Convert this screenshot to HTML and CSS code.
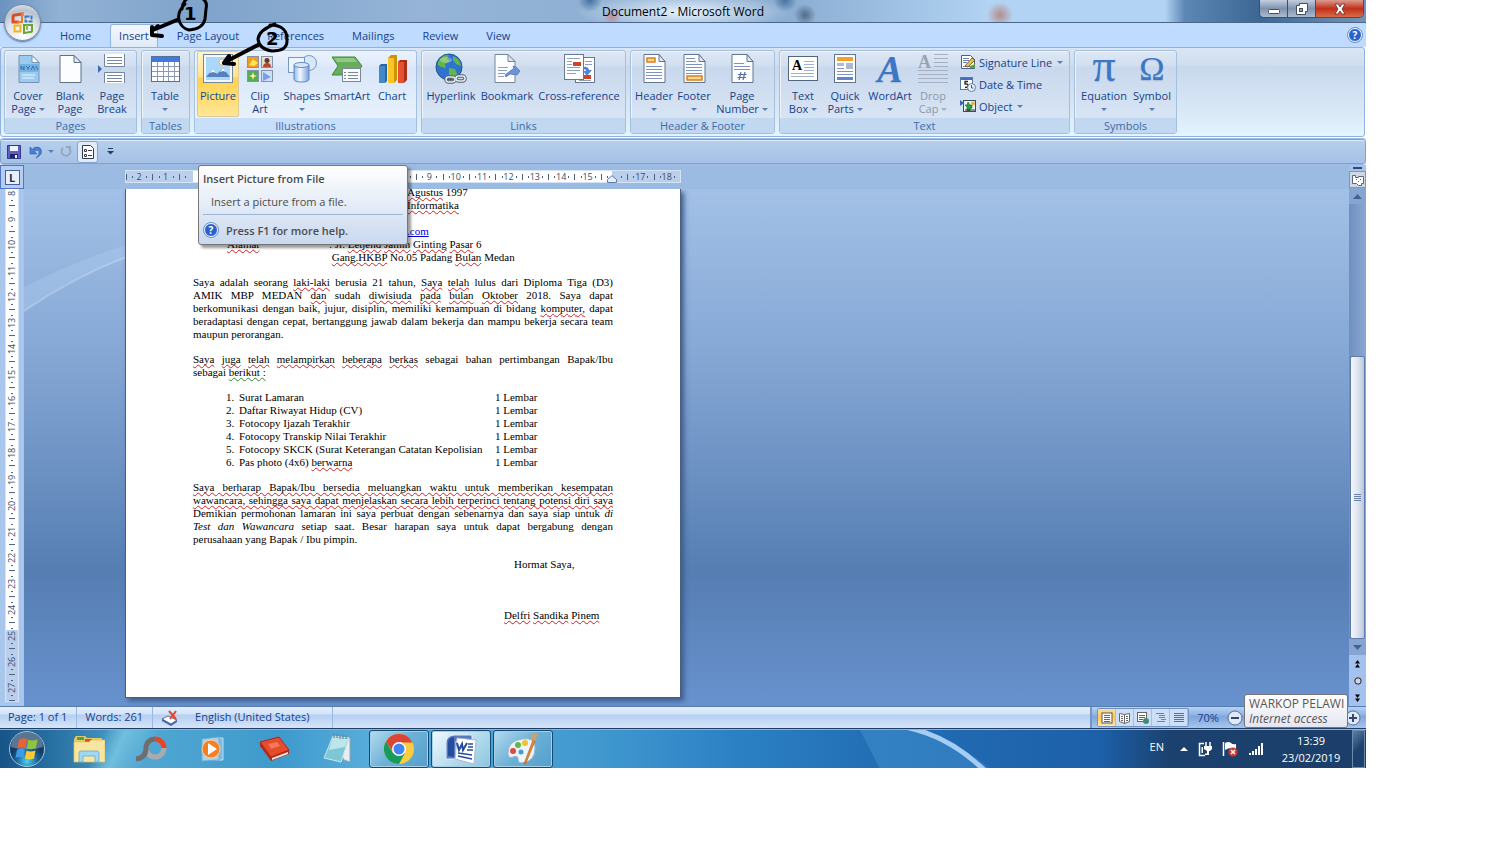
FILE: index.html
```html
<!DOCTYPE html>
<html lang="en">
<head>
    <meta charset="UTF-8">
    <meta name="viewport" content="width=device-width, initial-scale=1.0">
    <title>Document2 - Microsoft Word</title>
    <link rel="stylesheet" href="styles.css">
</head>
<body>
<div class="desktop">

    <!-- Title bar -->
    <header class="titlebar">
        <h1>Document2 - Microsoft Word</h1>
        <div class="window-buttons">
            <button aria-label="Minimize"><svg width="12" height="12" viewBox="0 0 12 12"><rect x=".5" y="6.500" width="11" height="4" rx="1" fill="#fff" stroke="#454d5c"/></svg></button>
            <button aria-label="Restore"><svg width="12" height="12" viewBox="0 0 12 12"><path d="M3.500.500h8v8h-2v3h-9v-9h3z" fill="#fff" stroke="#454d5c"/><rect x="3.500" y="5.500" width="3" height="3" fill="#8ba2c0" stroke="#454d5c"/></svg></button>
            <button class="close" aria-label="Close"><svg width="12" height="12" viewBox="0 0 12 12"><path d="M1 1h3l2 3 2-3h3L8 6l3 5H8L6 8l-2 3H1l3-5z" fill="#fff" stroke="#5b3030" stroke-width=".8"/></svg></button>
        </div>
    </header>

    <button class="office-button" aria-label="Office Button">
        <svg width="24" height="24" viewBox="0 0 24 24" fill="none" stroke-width="3">
            <path d="M11 5V3L4 4q-2 0-2 2v5h6" stroke="#d9501e"/>
            <path d="M11 2v9H6" stroke="#ee7d2b" stroke-width="2"/>
            <rect x="14.500" y="5.500" width="6" height="5" stroke="#3a78c6" stroke-width="2" stroke-dasharray="4 1"/>
            <rect x="3.500" y="14.500" width="6" height="6" stroke="#f4b31d" stroke-width="2"/>
            <path d="M13 14h8v6q0 1-2 1l-6 1z" stroke="#6aa52c" stroke-width="2"/>
            <path d="M16 14v5" stroke="#8cc63f" stroke-width="2"/>
        </svg>
    </button>

    <!-- Ribbon -->
    <nav class="tabs">
        <button>Home</button>
        <button class="active">Insert</button>
        <button>Page Layout</button>
        <button>References</button>
        <button>Mailings</button>
        <button>Review</button>
        <button>View</button>
        <button class="help" aria-label="Help"><span class="help-icon">?</span></button>
    </nav>

    <section class="ribbon">
        <div class="group">
            <div class="items">
                <button class="tool">
                    <svg class="icon" viewBox="0 0 32 32"><path d="M7 2.500h13l7 7v20H7z" fill="#9ccbf0" stroke="#7893b5"/><path d="M20 2.500v7h7z" fill="#fff" stroke="#7893b5"/><path d="M7.500 11h19v8h-19z" fill="#74b3e4"/><path d="M9 17v-4l3 4v-4m2 0 2 2v2m0-2 2-2m1 4 2-4 2 4m1-4 2 4" stroke="#356fa8" fill="none"/><path d="M10 22h13M10 25h12" stroke="#e8f5ff"/></svg>
                    <span>Cover<br>Page <i class="arrow"></i></span>
                </button>
                <button class="tool">
                    <svg class="icon" viewBox="0 0 32 32"><path d="M6 2.500h14l7 7v20H6z" fill="#fcfdff" stroke="#5f6f86"/><path d="M20 2.500v7h7z" fill="#dfe8f4" stroke="#5f6f86"/></svg>
                    <span>Blank<br>Page</span>
                </button>
                <button class="tool">
                    <svg class="icon" viewBox="0 0 32 32"><path d="M8.500 1v12.500h20V1M8.500 30V19.500h20V30" fill="#fff" stroke="#74859e"/><path d="M11 4.500h15M11 7.500h15M11 10.500h15M11 22.500h15M11 25.500h15M11 28.500h15" stroke="#7188b0"/><path d="M2 12v8l4-4z" fill="#3e69b8"/></svg>
                    <span>Page<br>Break</span>
                </button>
            </div>
            <h2>Pages</h2>
        </div>

        <div class="group">
            <div class="items">
                <button class="tool">
                    <svg class="icon" viewBox="0 0 32 32"><rect x="2.500" y="3.500" width="28" height="25" fill="#fff" stroke="#5c6f93"/><path d="M3 4h27v5H3z" fill="#3f7be0"/><path d="M3 13.500h27M3 18.500h27M3 23.500h27M8.500 9v19M14.500 9v19M19.500 9v19M25.500 9v19" stroke="#8c9ab3"/></svg>
                    <span>Table<br><i class="arrow"></i></span>
                </button>
            </div>
            <h2>Tables</h2>
        </div>

        <div class="group lit">
            <div class="items">
                <button class="tool selected">
                    <svg class="icon" viewBox="0 0 32 32"><rect x="1.500" y="1.500" width="29" height="28" fill="#f5f8fb" stroke="#75879e"/><path d="M4 4h24v23H4z" fill="#a9d8fa"/><circle cx="20" cy="9" r="3" fill="#fff2cf" stroke="#eab676"/><path d="M4 24l7-8 4 5 6-6 7 9z" fill="#587fbd"/><path d="M8 20l3-4 3 4-3-1zM18 19l3-4 3 4-3-1z" fill="#fff"/></svg>
                    <span>Picture</span>
                </button>
                <button class="tool">
                    <svg class="icon" viewBox="0 0 32 32"><g stroke="#8493a8"><rect x="3.500" y="3.500" width="11" height="11" fill="#f29a22"/><rect x="17.500" y="3.500" width="11" height="11" fill="#e8ddd2"/><rect x="3.500" y="17.500" width="11" height="11" fill="#4fae57"/><rect x="17.500" y="17.500" width="11" height="11" fill="#cfe0fa"/></g><path d="M5 12l4-6 5 4-4 3z" fill="#ffe451"/><circle cx="23" cy="7.500" r="2.500" fill="#653c2a"/><path d="M19 14q0-4 4-4t4 4z" fill="#b44a34"/><path d="M9 19l1 3 3 1-3 1-1 3-1-3-3-1 3-1z" fill="#fff48b"/><path d="M19 19l8 5-8 4z" fill="#7b9fe8"/></svg>
                    <span>Clip<br>Art</span>
                </button>
                <button class="tool">
                    <svg class="icon" viewBox="0 0 32 32"><defs><linearGradient id="steel"><stop offset="0" stop-color="#8db6ea"/><stop offset=".4" stop-color="#f2f8ff"/><stop offset="1" stop-color="#7aa4dc"/></linearGradient></defs><circle cx="23" cy="10" r="7.500" fill="#d8e7fa" stroke="#7697c4"/><rect x="2.500" y="4.500" width="16" height="15" fill="#edf4fd" stroke="#7697c4"/><path d="M8 12v14q0 3 7.500 3t7.500-3V12z" fill="url(#steel)" stroke="#6288bd"/><ellipse cx="15.500" cy="12" rx="7.500" ry="2.500" fill="#d6e6fa" stroke="#6288bd"/></svg>
                    <span>Shapes<br><i class="arrow"></i></span>
                </button>
                <button class="tool w48">
                    <svg class="icon" viewBox="0 0 32 32"><path d="M1 4h23l7 9-7 9H1l6-9z" fill="#67ad5b" stroke="#3f8a3d"/><path d="M3 5h20l3 4H6z" fill="#91ca84"/><rect x="11.500" y="15.500" width="18" height="13" fill="#f7f8fa" stroke="#7c8796"/><path d="M17 19.500h10M17 22.500h10M17 25.500h10M13 19.500h2M13 22.500h2M13 25.500h2" stroke="#7a8698"/></svg>
                    <span>SmartArt</span>
                </button>
                <button class="tool">
                    <svg class="icon" viewBox="0 0 32 32"><path d="M3 13l2-2h6v17l-2 2H3z" fill="#2a659f"/><path d="M3 13h6v17H3z" fill="#4189c9"/><path d="M12 5l3-3h6v25l-3 3h-6z" fill="#cf9200"/><path d="M12 5h6v25h-6z" fill="#fbc526"/><path d="M22 9l2-2h7v20l-3 3h-6z" fill="#a93017"/><path d="M22 9h6v21h-6z" fill="#e5522f"/></svg>
                    <span>Chart</span>
                </button>
            </div>
            <h2>Illustrations</h2>
        </div>

        <div class="group">
            <div class="items">
                <button class="tool w54">
                    <svg class="icon" viewBox="0 0 32 32"><circle cx="14" cy="14" r="13" fill="#2e74cd" stroke="#245194"/><path d="M3 9q4-8 11-7l-2 4 3 2-5 3 1 4-5-1-3-2zM18 3q7 3 8 10l-5-2-3-4zM14 15l6 1 2 5-5 6-3-5z" fill="#63b64c"/><ellipse cx="11" cy="7" rx="6" ry="3" fill="#fff" opacity=".3"/><g fill="none" stroke="#59626e" stroke-width="3.500"><rect x="11" y="24" width="9" height="5" rx="2.500"/><rect x="21" y="23" width="9" height="5" rx="2.500"/></g><g fill="none" stroke="#e5eaf0" stroke-width="1.500"><rect x="11" y="24" width="9" height="5" rx="2.500"/><rect x="21" y="23" width="9" height="5" rx="2.500"/></g></svg>
                    <span>Hyperlink</span>
                </button>
                <button class="tool w58">
                    <svg class="icon" viewBox="0 0 32 32"><path d="M4 1.500h13l7 7v21H4z" fill="#fcfdff" stroke="#7a8699"/><path d="M17 1.500v7h7z" fill="#e0e7f1" stroke="#7a8699"/><path d="M7 14.500h10M7 17.500h9M7 20.500h7M7 23.500h6" stroke="#8fa1be"/><path d="M14 22l9-7-1-2 3 1 4 4-3 4-7-1-4 3z" fill="#6d94d6" stroke="#4a6cae" stroke-width=".7"/></svg>
                    <span>Bookmark</span>
                </button>
                <button class="tool w86">
                    <svg class="icon" viewBox="0 0 32 32"><rect x="12.500" y="4.500" width="19" height="25" fill="#fff" stroke="#687890"/><path d="M22 8.500h7M22 11.500h7M16 27.500h12" stroke="#8ca0c0"/><path d="M20 22h8v4h-8z" fill="#cb452b"/><rect x="1.500" y="1.500" width="19" height="25" fill="#fff" stroke="#687890"/><path d="M4 5.500h13M4 8.500h5M4 11.500h5M4 14.500h13M4 17.500h13M4 20.500h9" stroke="#8ca0c0"/><path d="M10 9h8v4h-8z" fill="#cb452b"/><path d="M20 14q5-1 6 3h3l-5 6-4-5h3q0-2-3-2z" fill="#4f85db"/></svg>
                    <span>Cross-reference</span>
                </button>
            </div>
            <h2>Links</h2>
        </div>

        <div class="group">
            <div class="items">
                <button class="tool">
                    <svg class="icon" viewBox="0 0 32 32"><path d="M6 1.500h15l6 7v21H6z" fill="#fcfdff" stroke="#64748c"/><path d="M21 1.500v7h6z" fill="#dfe8f4" stroke="#64748c"/><rect x="9" y="5" width="8" height="4" fill="#fbd48e" stroke="#d9801c" stroke-width="1.500"/><path d="M8 13.500h16M8 16.500h16M8 19.500h16M8 22.500h16M8 25.500h16" stroke="#7e93c0"/></svg>
                    <span>Header<br><i class="arrow"></i></span>
                </button>
                <button class="tool w38">
                    <svg class="icon" viewBox="0 0 32 32"><path d="M6 1.500h15l6 7v21H6z" fill="#fcfdff" stroke="#64748c"/><path d="M21 1.500v7h6z" fill="#dfe8f4" stroke="#64748c"/><path d="M8 5.500h9M8 8.500h10M8 11.500h16M8 14.500h16M8 17.500h16M8 20.500h16" stroke="#7e93c0"/><rect x="9" y="23" width="15" height="4" fill="#fbd48e" stroke="#d9801c" stroke-width="1.500"/></svg>
                    <span>Footer<br><i class="arrow"></i></span>
                </button>
                <button class="tool w58">
                    <svg class="icon" viewBox="0 0 32 32"><path d="M6 1.500h15l6 7v21H6z" fill="#fcfdff" stroke="#64748c"/><path d="M21 1.500v7h6z" fill="#dfe8f4" stroke="#64748c"/><path d="M8 10.500h10M8 13.500h16M8 16.500h16" stroke="#7e93c0"/><path d="M15 19l-2 8M19 19l-2 8M12 21.500h8.500M11.500 24.500H20" stroke="#5670ae" stroke-width="1.200"/></svg>
                    <span>Page<br>Number <i class="arrow"></i></span>
                </button>
            </div>
            <h2>Header &amp; Footer</h2>
        </div>

        <div class="group">
            <div class="items">
                <button class="tool">
                    <svg class="icon" viewBox="0 0 32 32"><rect x="1.500" y="3.500" width="29" height="24" fill="#fff" stroke="#55657e"/><text x="5" y="17" font-family="Liberation Serif, serif" font-size="14" font-weight="bold">A</text><path d="M17 8.500h10M17 11.500h10M17 14.500h10M17 17.500h10M4 20.500h23M4 23.500h23" stroke="#a0b2d0"/></svg>
                    <span>Text<br>Box <i class="arrow"></i></span>
                </button>
                <button class="tool">
                    <svg class="icon" viewBox="0 0 32 32"><rect x="5.500" y="1.500" width="21" height="28" fill="#fff" stroke="#64748c"/><path d="M8 4h16v4H8z" fill="#f5a02c"/><path d="M8 10h7v3H8zM17 10h7v6h-7z" fill="#a9b9d6"/><path d="M8 15.500h7M8 18.500h16M8 21.500h16" stroke="#7e93c0"/><path d="M8 24h16v3H8z" fill="#5f85d6"/></svg>
                    <span>Quick<br>Parts <i class="arrow"></i></span>
                </button>
                <button class="tool w48">
                    <span class="icon glyph slanted">A</span>
                    <span>WordArt<br><i class="arrow"></i></span>
                </button>
                <button class="tool w38 off" disabled>
                    <svg class="icon open-box" viewBox="0 0 32 32"><text x="1" y="15" font-family="Liberation Serif, serif" font-size="18" font-weight="bold" fill="#98a4b4">A</text><path d="M17 1.500h14M17 5.500h14M17 9.500h14M17 13.500h14M1 17.500h30M1 21.500h30M1 25.500h30M1 29.500h30" stroke="#a5b1c2"/></svg>
                    <span>Drop<br>Cap <i class="arrow"></i></span>
                </button>
                <div class="small-tools">
                    <button>
                        <svg width="16" height="16" viewBox="0 0 16 16"><path d="M1.500 1.500h9l4 4v9h-13z" fill="#fff" stroke="#4f6079"/><path d="M3 4.500h6M3 6.500h6M3 8.500h4M3 12.500h9" stroke="#6d83a8"/><path d="M5 12l7-8 3 2-7 7z" fill="#efc04a" stroke="#5c4423" stroke-width=".8"/><path d="M10 12l5-2v4h-5z" fill="#5b9e43"/></svg>
                        Signature Line <i class="arrow"></i>
                    </button>
                    <button>
                        <svg width="16" height="16" viewBox="0 0 16 16"><rect x=".5" y="1.500" width="12" height="12" fill="#fff" stroke="#5b78aa"/><path d="M1 2h11v2H1z" fill="#3f6fc5"/><path d="M8 5.500H5v2.500q3-.5 3 1.500t-3 2" fill="none" stroke="#222" stroke-width="1.300"/><circle cx="11.500" cy="11.500" r="4" fill="#eaf2fb" stroke="#657d9f"/><path d="M11.500 9v3h2" fill="none" stroke="#3c5887"/></svg>
                        Date &amp; Time
                    </button>
                    <button>
                        <svg width="16" height="16" viewBox="0 0 16 16"><rect x="3.500" y="2.500" width="12" height="11" fill="#e9f2fb" stroke="#3d4b5e"/><path d="M0 2v6l4-3z" fill="#3766b8"/><path d="M7 13V9L5 7h2l1-3 2 3h2v3l-2 1v2z" fill="#2f9c35" stroke="#176b20" stroke-width=".6"/><circle cx="13" cy="5.500" r="2" fill="#edb440"/><path d="M5 12h10" stroke="#333"/></svg>
                        Object <i class="arrow"></i>
                    </button>
                </div>
            </div>
            <h2>Text</h2>
        </div>

        <div class="group">
            <div class="items">
                <button class="tool w54">
                    <span class="icon glyph pi">π</span>
                    <span>Equation<br><i class="arrow"></i></span>
                </button>
                <button class="tool">
                    <span class="icon glyph">Ω</span>
                    <span>Symbol<br><i class="arrow"></i></span>
                </button>
            </div>
            <h2>Symbols</h2>
        </div>
    </section>

    <!-- Quick access toolbar -->
    <div class="quick-access">
        <button aria-label="Save"><svg width="14" height="14" viewBox="0 0 14 14"><path d="M.5.500h13v13h-13z" fill="#5b5fc7" stroke="#33388f"/><path d="M3 1h8v5H3z" fill="#eef3ff"/><path d="M3 9h8v4H3z" fill="#20265e"/><path d="M8 10h2v3H8z" fill="#fff"/></svg></button>
        <button aria-label="Undo"><svg width="14" height="14" viewBox="0 0 14 14"><path d="M1 2v7h7L5.500 6.500Q9 4 10 6.500T7 13q6-3 5.500-7T8 2 4 4.500z" fill="#4a7fd6" stroke="#305ba8" stroke-width=".6"/></svg></button>
        <button class="split" aria-label="Undo list"><i class="arrow"></i></button>
        <button aria-label="Redo"><svg width="12" height="12" viewBox="0 0 12 12"><path d="M3 2a4.500 4.500 0 1 0 6 0M6 1h4v4" fill="none" stroke="#93a5bf" stroke-width="1.800"/></svg></button>
        <button class="framed" aria-label="Options"><svg width="12" height="14" viewBox="0 0 12 14"><path d="M.5.500h8l3 3v10H.5z" fill="#fff" stroke="#333c4c"/><path d="M2.500 4.500h2v2h-2zM2.500 9.500h2v2h-2zM6 5.500h4M6 10.500h4" fill="none" stroke="#333c4c"/></svg></button>
        <button class="more" aria-label="Customize"><svg width="7" height="7" viewBox="0 0 7 7"><path d="M1 .5h5" stroke="#1f3f6f"/><path d="M0 3h7L3.500 6.500z" fill="#1f3f6f"/></svg></button>
    </div>

    <!-- Document area -->
    <main class="workspace">
        <button class="tab-stop" aria-label="Tab stop"><span>L</span></button>
        <div class="ruler-row">
            <div class="ruler" id="ruler"></div>
            <svg class="indent" width="10" height="8" viewBox="0 0 10 8"><path d="M.5 7.500v-3L5 .7l4.500 3.800v3z" fill="#e6eefa" stroke="#5f7fab"/></svg>
        </div>
        <div class="side-ruler"><div class="side-scale" id="side-ruler"></div></div>

        <div class="canvas">
            <svg class="swoosh" width="102" height="110" viewBox="0 0 102 110"><path d="M0 42Q52 16 102 0v14Q50 30 0 66z" fill="#b3cdf0" opacity=".35"/><path d="M0 66Q50 32 102 12" stroke="#c3d8f4" stroke-width="2" fill="none" opacity=".5"/></svg>
            <article class="page">
                <p class="line tail"><u>Agustus</u> 1997</p>
                <p class="line tail"><u>Informatika</u></p>
                <p class="line">&nbsp;</p>
                <p class="line tail"><a href="#">.com</a></p>
                <p class="line address"><span><u>Alamat</u></span>: Jl. <u>Letjend</u> <u>Jamin</u> <u>Ginting</u> <u>Pasar</u> 6</p>
                <p class="line address"><span></span>&nbsp;<u>Gang.HKBP</u> No.05 Padang <u>Bulan</u> Medan</p>

                <div class="para">
                    <p class="line full">Saya adalah seorang <u>laki-laki</u> berusia 21 tahun, <u>Saya</u> <u>telah</u> lulus dari Diploma Tiga (D3)</p>
                    <p class="line full">AMIK MBP MEDAN <u>dan</u> sudah <u>diwisiuda</u> <u>pada</u> <u>bulan</u> <u>Oktober</u> 2018. Saya dapat</p>
                    <p class="line full">berkomunikasi dengan baik, jujur, disiplin, memiliki kemampuan di bidang <u>komputer,</u> dapat</p>
                    <p class="line full">beradaptasi dengan cepat, bertanggung jawab dalam bekerja dan mampu bekerja secara team</p>
                    <p class="line">maupun perorangan.</p>
                </div>

                <div class="para">
                    <p class="line full"><u>Saya</u> <u>juga</u> <u>telah</u> <u>melampirkan</u> <u>beberapa</u> <u>berkas</u> sebagai bahan pertimbangan Bapak/Ibu</p>
                    <p class="line">sebagai <u class="grammar">berikut :</u></p>
                </div>

                <table class="files">
                    <tr><td>1.</td><td>Surat Lamaran</td><td>1 Lembar</td></tr>
                    <tr><td>2.</td><td>Daftar Riwayat Hidup (CV)</td><td>1 Lembar</td></tr>
                    <tr><td>3.</td><td>Fotocopy Ijazah Terakhir</td><td>1 Lembar</td></tr>
                    <tr><td>4.</td><td>Fotocopy Transkip Nilai Terakhir</td><td>1 Lembar</td></tr>
                    <tr><td>5.</td><td>Fotocopy SKCK (Surat Keterangan Catatan Kepolisian</td><td>1 Lembar</td></tr>
                    <tr><td>6.</td><td>Pas photo (4x6) <u>berwarna</u></td><td>1 Lembar</td></tr>
                </table>

                <div class="para">
                    <p class="line full"><u>Saya berharap Bapak/Ibu bersedia meluangkan waktu untuk memberikan kesempatan</u></p>
                    <p class="line full"><u>wawancara, sehingga saya dapat menjelaskan secara lebih terperinci tentang potensi diri saya</u></p>
                    <p class="line full">Demikian permohonan lamaran ini saya perbuat dengan sebenarnya dan saya siap untuk <em>di</em></p>
                    <p class="line full"><em>Test dan Wawancara</em> setiap saat. Besar harapan saya untuk dapat bergabung dengan</p>
                    <p class="line">perusahaan yang Bapak / Ibu pimpin.</p>
                </div>

                <div class="signature">
                    <p class="line">Hormat Saya,</p>
                    <p class="line"><u>Delfri</u> <u>Sandika</u> <u>Pinem</u></p>
                </div>
            </article>
        </div>

        <div class="scrollbar">
            <button class="splitter" aria-label="Split"></button>
            <button class="toggle" aria-label="View Ruler"><svg width="12" height="12" viewBox="0 0 12 12"><path d="M.5 1.500h3v2h3v-1h5v7h-2v2h-3l-2-2h-4z" fill="#fff" stroke="#5a6577"/><path d="M4 5.500h1M6 7.500h1M8 5.500h1" stroke="#5a6577" fill="none"/></svg></button>
            <button class="step" aria-label="Scroll up"><svg width="9" height="5" viewBox="0 0 9 5"><path d="M0 5l4.500-5L9 5z" fill="#46618f"/></svg></button>
            <div class="track"><div class="thumb"></div></div>
            <button class="step" aria-label="Scroll down"><svg width="9" height="5" viewBox="0 0 9 5"><path d="M0 0l4.500 5L9 0z" fill="#46618f"/></svg></button>
            <button class="browse" aria-label="Previous Page"><svg width="7" height="8" viewBox="0 0 7 8"><path d="M1 3.500L3.500 0 6 3.500zM1 7.500L3.500 4 6 7.500z"/></svg></button>
            <button class="browse" aria-label="Select Browse Object"><svg width="8" height="8" viewBox="0 0 8 8"><circle cx="4" cy="4" r="3.200" fill="#cfd6e2" stroke="#222"/></svg></button>
            <button class="browse" aria-label="Next Page"><svg width="7" height="8" viewBox="0 0 7 8"><path d="M1 .5L3.500 4 6 .5zM1 4.500L3.500 8 6 4.500z"/></svg></button>
        </div>
    </main>

    <!-- Status bar -->
    <footer class="status">
        <button>Page: 1 of 1</button>
        <button>Words: 261</button>
        <button class="proof" aria-label="Proofing"><svg width="18" height="16" viewBox="0 0 18 16"><path d="M1 9l6-3 9 4-6 4z" fill="#fff" stroke="#52709e"/><path d="M1 9v2l9 5 6-4v-2l-6 4z" fill="#3d66ad"/><path d="M8 1l7 8M15 1L9 9" stroke="#e8432b" stroke-width="2"/></svg></button>
        <button class="language">English (United States)</button>
        <div class="status-right">
            <div class="views">
                <button class="on" aria-label="Print Layout"><svg width="12" height="12" viewBox="0 0 12 12"><rect x="1" y="1" width="10" height="10" fill="#fff" stroke="#555"/><path d="M3 3.500h6M3 5.500h6M3 7.500h6M3 9.500h6" stroke="#666"/></svg></button>
                <button aria-label="Full Screen Reading"><svg width="12" height="12" viewBox="0 0 12 12"><path d="M.5 1.500l5 1 5-1v8l-5 2-5-2zM5.500 2.500v9M2 4.500h2M2 6.500h2M2 8.500h2M7 4.500h2M7 6.500h2M7 8.500h2" fill="#fff" stroke="#666"/></svg></button>
                <button aria-label="Web Layout"><svg width="12" height="12" viewBox="0 0 12 12"><rect x=".5" y=".5" width="9" height="9" fill="#fff" stroke="#666"/><path d="M2 3.500h6M2 5.500h6M2 7.500h4" stroke="#666"/><circle cx="9" cy="9" r="3" fill="#3c8d77"/></svg></button>
                <button aria-label="Outline"><svg width="12" height="12" viewBox="0 0 12 12"><path d="M1 1.500h8M4 3.500h6M4 5.500h6M6 7.500h5M2 9.500h8" stroke="#7a828e"/></svg></button>
                <button aria-label="Draft"><svg width="12" height="12" viewBox="0 0 12 12"><path d="M1 1.500h10M1 3.500h10M1 5.500h10M1 7.500h10M1 9.500h10" stroke="#666e7a"/></svg></button>
            </div>
            <button class="zoom-level">70%</button>
            <button class="round" aria-label="Zoom Out"><svg width="16" height="16" viewBox="0 0 16 16"><circle cx="8" cy="8" r="7" fill="#dfe9f8" stroke="#586f96"/><path d="M4 8h8" stroke="#34486e" stroke-width="2"/></svg></button>
            <button class="round last" aria-label="Zoom In"><svg width="16" height="16" viewBox="0 0 16 16"><circle cx="8" cy="8" r="7" fill="#dfe9f8" stroke="#586f96"/><path d="M4 8h8M8 4v8" stroke="#34486e" stroke-width="2"/></svg></button>
        </div>
    </footer>

    <!-- Taskbar -->
    <div class="taskbar">
        <svg class="beam" width="200" height="39" viewBox="0 0 200 39"><path d="M0 0h50Q100 12 130 39H20z" fill="#4b9bd6" opacity=".4"/><path d="M45-3Q90 6 126 42" stroke="#a5cdf3" stroke-width="5" fill="none"/></svg>
        <button class="start" aria-label="Start">
            <svg width="38" height="38" viewBox="0 0 38 38"><defs><radialGradient id="orb" cy=".85"><stop offset="0" stop-color="#4ed2f5"/><stop offset=".6" stop-color="#1d6495"/><stop offset="1" stop-color="#123a63"/></radialGradient></defs><circle cx="19" cy="19" r="17.500" fill="url(#orb)" stroke="#a4c8e2"/><path d="M3 17a16 15 0 0 1 32 0q-16 5-32 0z" fill="#fff" opacity=".3"/><path d="M11 10q4-3 8-1l-1.500 9q-4-2-8 0z" fill="#ea6134"/><path d="M20 9.500q4 2 9.500 0L28 18q-4 2-9 .5z" fill="#8cc63e"/><path d="M9 20q4-3 8 0l-1.500 8q-4-2-8 0z" fill="#3d9be3"/><path d="M18.500 20.500q4 2 9 0L26 28.500q-5 2-9 0z" fill="#fbca39"/></svg>
        </button>
        <div class="apps">
            <button aria-label="Explorer"><svg width="32" height="30" viewBox="0 0 32 30"><path d="M1 5l2-3h9l2 2h15v23H1z" fill="#e8c964"/><path d="M4 3h7v3H4z" fill="#3da55c"/><path d="M12 5h7v3h-7z" fill="#d94c31"/><path d="M21 6h8v3h-8z" fill="#3c8ed6"/><path d="M1 8h15l2-2h14v22H1z" fill="#f8e6a0" stroke="#ddbf65" stroke-width=".7"/><path d="M6 28V19q0-2 2-2h16q2 0 2 2v9h-4v-6H10v6z" fill="#9ed8f4" stroke="#5da2cf" stroke-width=".7"/></svg></button>
            <button aria-label="Capture tool"><svg width="32" height="28" viewBox="0 0 32 28"><circle cx="20" cy="13" r="9" fill="none" stroke="#a9abad" stroke-width="5"/><path d="M20 4a9 9 0 0 1 9 9" fill="none" stroke="#ea4426" stroke-width="5"/><path d="M20 4A9 9 0 0 0 11 13q0 10-10 11" fill="none" stroke="#6f6d6e" stroke-width="5"/></svg></button>
            <button aria-label="Media Player"><svg width="28" height="28" viewBox="0 0 28 28"><path d="M17 3h7v22h-7z" fill="#7dbde2" stroke="#b5dff4"/><path d="M3 4l17-2v23L3 26z" fill="#a9d3ea" stroke="#75acd0"/><circle cx="12" cy="14" r="9" fill="#f47f24" stroke="#fbd0a0"/><path d="M9 8l9 6-9 6z" fill="#fff"/></svg></button>
            <button aria-label="Red book"><svg width="32" height="28" viewBox="0 0 32 28"><path d="M1 7l19-5 10 13-18 7z" fill="#e84b2b" stroke="#a62a17"/><path d="M1 7v4l11 15 18-7v-4l-18 7z" fill="#b12c17"/><path d="M13 23l16-6v2l-16 6z" fill="#f7e7d8"/><path d="M9 9l9-2 3 4-9 3z" fill="#f07a58"/></svg></button>
            <button aria-label="Notepad"><svg width="32" height="30" viewBox="0 0 32 30"><path d="M12 3l17 1v24l-6-2z" fill="#e9edef" stroke="#95a7af"/><path d="M12 2l16 2-8 24L3 24z" fill="#7ec8d6" stroke="#c7e8ed"/><path d="M12 3l15 2-3 8-16 3z" fill="#d7f2f5" opacity=".7"/><path d="M13 0v4m3-4v4m3-3v4m3-4v4m3-4v4" stroke="#687b87"/></svg></button>
            <button class="open" aria-label="Chrome"><svg width="30" height="30" viewBox="0 0 30 30"><circle cx="15" cy="15" r="15" fill="#f9cd3d"/><path d="M15 8.500h13.500L28 7.500A15 15 0 0 0 2 7.500L9 18z" fill="#db4437"/><path d="M2 7.500A15 15 0 0 0 15 30l6-11H9z" fill="#169b5c"/><circle cx="15" cy="15" r="7" fill="#fff"/><circle cx="15" cy="15" r="5.500" fill="#4384f4"/></svg></button>
            <button class="open current" aria-label="Word"><svg width="32" height="30" viewBox="0 0 32 30"><path d="M1 25V9q0-7 8-8h18v6H11v18z" fill="#5678bd" stroke="#dfeaf9"/><path d="M3 22V9q0-5 6-6v20z" fill="#254c9e"/><path d="M12 4l19 2-2 24-19-5z" fill="#fff" stroke="#aab8d1"/><path d="M12 9l2 7 3-6 1 6 4-7" fill="none" stroke="#254c9e" stroke-width="2"/><path d="M23 10h5M23 13h5M22 16h6M13 19l14 2M13 22l14 3" stroke="#254c9e" stroke-width="1.600"/></svg></button>
            <button class="open" aria-label="Paint"><svg width="32" height="32" viewBox="0 0 32 32"><path d="M1 20Q1 8 15 6t13 9q0 14-14 15-3 0-3-4t-5-2q-5 2-5-4z" fill="#eaf4fa" stroke="#9bb7ca"/><circle cx="6" cy="18" r="3" fill="#dc4b3f"/><circle cx="11" cy="12" r="3" fill="#64b44f"/><circle cx="18" cy="10" r="3" fill="#f4c034"/><circle cx="14" cy="19" r="2.500" fill="#4a9ccb"/><path d="M17 31l9-24 2 1-9 22z" fill="#e88b31" stroke="#b8621b" stroke-width=".7"/><path d="M23 2q5-3 8 0-2 2-3 6l-3-1q0-3-2-5z" fill="#cda16d"/></svg></button>
        </div>
        <div class="tray">
            <button class="lang">EN</button>
            <button aria-label="Show hidden icons"><svg width="8" height="4" viewBox="0 0 8 4"><path d="M0 4l4-4 4 4z" fill="#fff"/></svg></button>
            <button aria-label="Power"><svg width="14" height="16" viewBox="0 0 14 16"><path d="M6 2.500H1.500v12H7" fill="none" stroke="#fff" stroke-width="1.500"/><path d="M3.500 6h1.500v6H3.500z" fill="#fff"/><path d="M8 1v4M12 1v4" stroke="#fff" stroke-width="1.500"/><path d="M6 5h8v3l-2 2h-1v4H7v-1.500h2V10L6 8z" fill="#fff"/></svg></button>
            <button aria-label="Action Center"><svg width="16" height="16" viewBox="0 0 16 16"><path d="M1.500 1v14" stroke="#fff" stroke-width="1.500"/><path d="M3 2q4-2 6 0t5 1v6q-4 1-5-1T3 9z" fill="#fff"/><circle cx="11" cy="11" r="4.500" fill="#d8352a"/><path d="M9 9l4 4m0-4l-4 4" stroke="#fff" stroke-width="1.500"/></svg></button>
            <button aria-label="Network"><svg width="16" height="12" viewBox="0 0 16 12"><path d="M1 10h2v2H1zM4 8h2v4H4zM7 6h2v6H7zM10 3h2v9h-2zM13 0h2v12h-2z" fill="#fff"/></svg></button>
            <div class="clock">13:39<br>23/02/2019</div>
            <button class="peek" aria-label="Show desktop"></button>
        </div>
    </div>

    <!-- Popups -->
    <div class="tip">
        <strong>Insert Picture from File</strong>
        <p>Insert a picture from a file.</p>
        <div class="tip-help"><span class="help-icon">?</span><strong>Press F1 for more help.</strong></div>
    </div>

    <div class="network-tip">WARKOP PELAWI<br><em>Internet access</em></div>

    <!-- Pen marks -->
    <svg class="marks" width="150" height="80" viewBox="0 0 150 80" fill="none" stroke="#000" stroke-width="3" stroke-linecap="round" stroke-linejoin="round">
        <path d="M36 4Q28 12 30 20t10 10q14-1 16-11l1-10Q60-4 42-3q-8 2-9 12"/>
        <path d="M28 20L4 30M3 27v8l10 1M4 30l5-4" stroke-width="4"/>
        <path d="M126 24Q110 30 109 39q1 10 14 12 15 0 15-10 1-16-17-16"/>
        <path d="M109 45L76 62M80 56l-5 7 10 1" stroke-width="4"/>
        <g fill="#000" stroke="none" font-family="DejaVu Sans" font-weight="bold" font-size="18"><text x="35" y="20">1</text><text x="117" y="45">2</text></g>
    </svg>
</div>

<script>
    // Ruler numbers, one cell for each centimetre
    const ruler = document.getElementById('ruler');
    for (let i = -2; i <= 18; i++) {
        const cell = document.createElement('span');
        // 0 is the margin, 1 to 8 lie under the tooltip, 16 under the indent marker
        cell.textContent = ((i >= 0 && i <= 8) || i === 16) ? '' : Math.abs(i);
        ruler.appendChild(cell);
    }

    const sideRuler = document.getElementById('side-ruler');
    for (let i = 8; i <= 27; i++) {
        const cell = document.createElement('span');
        cell.textContent = i;
        sideRuler.appendChild(cell);
    }
</script>
</body>
</html>
```
FILE: styles.css
```css
* {
    margin: 0;
    padding: 0;
    box-sizing: border-box;
}

body {
    background: #fff;
    font-family: 'Open Sans', 'Noto Sans', sans-serif;
    font-size: 11px;
    line-height: 13px;
    color: #15428b;
}

button {
    border: none;
    background: none;
    font: inherit;
    color: inherit;
    white-space: nowrap;
    cursor: pointer;
}

svg {
    display: block;
}

.desktop {
    position: relative;
    display: flex;
    flex-direction: column;
    margin-right: 134px;
    min-height: calc(100vh - 75px);
    overflow: hidden;
}

/* Title bar */
.titlebar {
    display: flex;
    justify-content: center;
    height: 23px;
    border-bottom: 1px solid #4b6788;
    background:
        radial-gradient(circle at 590px 0, #47719f 0, transparent 12px),
        radial-gradient(circle at 785px 0, #47719f 0, transparent 12px),
        radial-gradient(circle at 612px 17px, #c08c9a 0, transparent 9px),
        radial-gradient(circle at 805px 15px, #526d88 0, transparent 11px),
        radial-gradient(circle at 1000px 15px, #b58d8d 0, transparent 13px),
        radial-gradient(ellipse 110px 20px at 685px 12px, #e6f1fb 0, transparent 100%),
        linear-gradient(90deg, #6a93bf 0, #92b2d4 60px, #7fa3cb 200px, #95b4d7 420px, #88abd0 780px, #b2d3f3 990px, #b2d3f3 1165px, #5c86b3 1185px, #3c6795 1260px, #7294b8 100%);
}

.titlebar h1 {
    font-size: 12px;
    font-weight: normal;
    line-height: 23px;
    color: #000;
}

.window-buttons {
    position: absolute;
    top: 0;
    right: 2px;
    display: flex;
    height: 18px;
    border: 1px solid #3d4e66;
    border-top: none;
    border-radius: 0 0 5px 5px;
    overflow: hidden;
}

.window-buttons button {
    display: flex;
    align-items: center;
    justify-content: center;
    width: 28px;
    border-right: 1px solid #3d4e66;
    background: linear-gradient(#c2cede, #8093ad 50%, #a9bbd0);
}

.window-buttons .close {
    width: 47px;
    border-right: none;
    background: linear-gradient(#dd9c8d, #c0301a 50%, #d96a45);
}

.office-button {
    position: absolute;
    top: 4px;
    left: 4px;
    z-index: 2;
    display: flex;
    align-items: center;
    justify-content: center;
    width: 37px;
    height: 37px;
    border: 1px solid #7a8ba5;
    border-radius: 50%;
    background: radial-gradient(circle at 50% 85%, #fff, #dfe4ec 45%, #b9c3d1 70%, #eef1f6);
    box-shadow: 0 1px 2px #4c6a92;
}

/* Ribbon */
.tabs {
    display: flex;
    gap: 10px;
    height: 24px;
    padding: 1px 3px 0 51px;
    background: #bfdbff;
}

.tabs button {
    padding: 0 8px 1px;
    border: 1px solid transparent;
    border-bottom: none;
}

.tabs .active {
    border-color: #8db2e3;
    border-radius: 3px 3px 0 0;
    background: linear-gradient(#f3f8fe, #dfeaf8);
}

.tabs .help {
    margin-left: auto;
    padding: 0 0 2px;
}

.help-icon {
    display: block;
    width: 14px;
    height: 14px;
    border: 1px solid #fff;
    border-radius: 50%;
    outline: 1px solid #6b8fc9;
    background: #2a62cc;
    color: #fff;
    font-size: 10px;
    font-weight: bold;
    line-height: 12px;
    text-align: center;
}

.ribbon {
    display: flex;
    gap: 4px;
    height: 90px;
    margin-right: 1px;
    padding: 2px 3px;
    border: 1px solid #8db2e3;
    border-radius: 3px;
    background: linear-gradient(#dbe6f4, #d0deef 17px, #c8d8ed 18px, #dcebf8 70px, #e3f5ff);
}

.group {
    display: flex;
    flex-direction: column;
    flex: none;
    border: 1px solid #a5bfdf;
    border-radius: 3px;
    background: linear-gradient(#dfe8f5, #d0deef 15px, #c9d8ed 16px, #dbe8f6);
    box-shadow: inset 1px 1px #edf4fc;
}

.lit {
    background: linear-gradient(#eaf2fc, #dfeafa 15px, #d8e6f9 16px, #edf5fe);
}

.items {
    display: flex;
    flex: 1;
    padding: 0 3px 0 2px;
}

.group h2 {
    height: 15px;
    background: #c1d8f0;
    color: #3e6aaa;
    font-size: 11px;
    font-weight: normal;
    line-height: 15px;
    text-align: center;
}

.lit h2 {
    background: #c8dffb;
}

.tool {
    display: flex;
    flex-direction: column;
    align-items: center;
    justify-content: flex-start;
    width: 42px;
    height: 66px;
    border: 1px solid transparent;
    border-radius: 2px;
    text-align: center;
}

.w38 { width: 38px; }
.w48 { width: 48px; }
.w54 { width: 54px; }
.w58 { width: 58px; }
.w86 { width: 86px; }

.selected {
    border-color: #dccb93;
    background: linear-gradient(#fff5cf, #ffe28f 25px, #ffd24d 26px, #ffe597);
}

.off {
    color: #8d99a8;
}

.icon {
    display: block;
    flex: none;
    width: 32px;
    height: 32px;
    margin: 1px 0 4px;
}

.open-box {
    overflow: visible;
}

.glyph {
    color: #3c76c4;
    font: 34px/32px 'Liberation Serif', serif;
    text-align: center;
    text-shadow: 0 1px 1px #a9bddb;
}

.pi {
    font-size: 46px;
    line-height: 26px;
}

.slanted {
    font-size: 38px;
    font-style: italic;
    font-weight: bold;
}

.arrow {
    display: inline-block;
    border: 3px solid transparent;
    border-top-color: #5c7fb2;
    border-bottom: none;
    vertical-align: 2px;
}

.off .arrow {
    border-top-color: #a3afbf;
}

.small-tools {
    display: flex;
    flex-direction: column;
    width: 114px;
    padding-left: 8px;
}

.small-tools button {
    display: flex;
    align-items: center;
    gap: 3px;
    height: 22px;
}

.small-tools .arrow {
    margin-left: 2px;
}

/* Quick access toolbar */
.quick-access {
    display: flex;
    align-items: center;
    height: 25px;
    margin-top: 2px;
    padding-left: 2px;
    border: 1px solid #7da2d1;
    border-radius: 3px;
    outline: 1px solid #9dbbe2;
    background: linear-gradient(#b7cfec, #a6c1e7);
    box-shadow: inset 0 1px #dceafa;
}

.quick-access button {
    display: flex;
    align-items: center;
    justify-content: center;
    width: 22px;
    height: 22px;
}

.quick-access .split {
    width: 8px;
}

.quick-access .framed {
    width: 21px;
    border: 1px solid #86a3cc;
    border-radius: 3px;
    background: #e0ecfa;
}

.quick-access .more {
    width: 24px;
}

/* Workspace */
.workspace {
    display: grid;
    grid-template-columns: 24px 1fr 17px;
    grid-template-rows: 24px 1fr;
    flex: 1;
    margin-top: 1px;
    background: #9cbbe3;
}

.tab-stop {
    display: flex;
    align-items: center;
    justify-content: center;
    border: 1px solid #4f77c6;
    background: #b5cdf0;
}

.tab-stop span {
    width: 15px;
    height: 15px;
    border: 1px solid #44639c;
    background: #e8f0fb;
    color: #1d2f4f;
    font-weight: bold;
}

.ruler-row {
    position: relative;
    padding: 5px 0 0 101px;
}

.ruler {
    display: flex;
    width: 556px;
    height: 13px;
    border: 1px solid #d4e3f6;
    background: linear-gradient(90deg, #b9cfec 67px, #fff 67px, #fff 486px, #b9cfec 486px);
}

.ruler span {
    flex: 1;
    background:
        linear-gradient(#4f5f7a, #4f5f7a) 0 50% / 1px 6px no-repeat,
        linear-gradient(#4f5f7a, #4f5f7a) 25% 50% / 1px 2px no-repeat,
        linear-gradient(#4f5f7a, #4f5f7a) 80% 50% / 1px 2px no-repeat;
    color: #3d4c66;
    font-size: 9px;
    line-height: 11px;
    text-align: center;
}

.indent {
    position: absolute;
    top: 10px;
    left: 583px;
}

.side-ruler {
    display: flex;
    padding: 0 5px 4px;
    overflow: hidden;
    background: #a9c6ec;
}

.side-scale {
    display: flex;
    flex-direction: column;
    width: 14px;
    margin: -10px 0 0;
    border: 1px solid #d4e3f6;
    background: linear-gradient(#fff 450px, #b9cfec 450px);
}

.side-scale span {
    flex: 1;
    background:
        linear-gradient(#4f5f7a, #4f5f7a) 50% 0 / 6px 1px no-repeat,
        linear-gradient(#4f5f7a, #4f5f7a) 50% 20% / 2px 1px no-repeat,
        linear-gradient(#4f5f7a, #4f5f7a) 50% 80% / 2px 1px no-repeat;
    color: #3d4c66;
    font-size: 9px;
    line-height: 12px;
    text-align: center;
    writing-mode: vertical-rl;
    transform: rotate(180deg);
}

.canvas {
    position: relative;
    padding: 0 0 8px 101px;
    overflow: hidden;
    background: linear-gradient(#a3c1e7, #87a9d6 30%, #567eb3 74%, #6892ce);
}

.swoosh {
    position: absolute;
    top: 56px;
    left: 0;
}

/* Document page */
.page {
    position: relative;
    width: 556px;
    height: 100%;
    padding: 0 67px;
    overflow: hidden;
    border: 1px solid #4b5e7d;
    border-top: none;
    background: #fff;
    box-shadow: 3px 3px 5px #3e5d8c;
    color: #000;
    font-family: 'Liberation Serif', 'Times New Roman', serif;
    font-size: 11px;
}

.page > .tail:first-child {
    margin-top: -3px;
}

.line {
    white-space: nowrap;
}

.full {
    text-align: justify;
    text-align-last: justify;
    white-space: normal;
}

.tail {
    padding-left: 214px;
}

.address {
    padding-left: 34px;
}

.address span {
    display: inline-block;
    width: 102px;
}

/* Spelling and grammar squiggles */
.page u {
    text-decoration: underline wavy #d02020 1px;
    text-decoration-skip-ink: none;
    text-underline-offset: 1px;
}

.page .grammar {
    text-decoration-color: #2e8b2e;
}

.page a {
    color: #0000e0;
}

.para, .files, .signature {
    margin-top: 12px;
}

.files {
    margin-left: 33px;
    border-collapse: collapse;
}

.files td {
    white-space: nowrap;
}

.files td:nth-child(1) {
    width: 13px;
}

.files td:nth-child(2) {
    width: 256px;
}

.signature {
    padding-left: 311px;
}

.signature .line:first-child {
    padding-left: 10px;
    margin-bottom: 38px;
}

/* Scroll bar */
.scrollbar {
    grid-column: 3;
    grid-row: 1 / 3;
    display: flex;
    flex-direction: column;
    background: #a5c2ee;
}

.scrollbar button {
    display: flex;
    align-items: center;
    justify-content: center;
}

.scrollbar .splitter {
    height: 2px;
    margin: 2px 4px;
    background: #34496f;
}

.scrollbar .toggle {
    height: 17px;
    border: 1px solid #8895ab;
    background: #cfd6e4;
}

.step {
    height: 16px;
    background: #86a5d2;
}

.track {
    display: flex;
    flex: 1;
    flex-direction: column;
    padding: 0 1px;
    background: linear-gradient(90deg, #6f8fc0, #8ba8d4);
}

.track::before {
    content: '';
    flex: 35;
}

.thumb {
    flex: 65;
    border: 1px solid #5e7dab;
    border-radius: 2px;
    background:
        repeating-linear-gradient(#6b82a8 0 1px, transparent 1px 2px) 50% 50% / 7px 7px no-repeat,
        linear-gradient(90deg, #f4f7fc, #dfe6f0 50%, #b9c6da);
}

.browse {
    height: 17px;
}

/* Status bar */
.status {
    display: flex;
    align-items: center;
    height: 23px;
    border-top: 1px solid #567db0;
    border-bottom: 1px solid #1f3f68;
    background: linear-gradient(#e6effc, #d3e3f9 7px, #b3cff2 8px, #d5e3f7 20px);
}

.status > button {
    height: 100%;
    padding: 0 9px 2px 8px;
    border-right: 1px solid #9bb9e0;
}

.status > .proof {
    padding: 0 8px;
    border: none;
}

.status > .language {
    padding-right: 23px;
}

.status-right {
    display: flex;
    align-items: center;
    width: 276px;
    height: 100%;
    margin-left: auto;
    padding-left: 5px;
    border-left: 2px solid #7596c4;
    background: linear-gradient(#b8d2f5, #8db3e6 8px, #80a5da 9px, #a7c5ee);
}

.views {
    display: flex;
    height: 19px;
    border: 1px solid #6f93c4;
    border-radius: 2px;
    background: #ccdff7;
}

.views button {
    display: flex;
    align-items: center;
    justify-content: center;
    width: 18px;
    border-right: 1px solid #a2bfe4;
}

.views .on {
    background: linear-gradient(#fbdb9c, #ffca57 50%, #ffe8a0);
}

.zoom-level {
    width: 38px;
}

.last {
    margin-left: auto;
    margin-right: 5px;
}

/* Taskbar */
.taskbar {
    position: relative;
    display: flex;
    align-items: center;
    height: 39px;
    border-top: 1px solid #86b6dc;
    background:
        linear-gradient(115deg, transparent 95px, #71bfdf 115px, transparent 145px),
        linear-gradient(90deg, #175487 0, #2a74a6 60px, #50a7d2 140px, #3e9acc 280px, #57addb 370px, #4098cf 600px, #2b80c4 740px, #236fb5 870px, #1c60a9 1100px, #1b416e 1170px, #1b3f6a 100%);
}

.beam {
    position: absolute;
    top: 0;
    left: 860px;
}

.start {
    margin: 0 12px 0 8px;
}

.apps {
    display: flex;
    height: 100%;
}

.apps button {
    display: flex;
    align-items: center;
    justify-content: center;
    width: 60px;
    margin: 0 1px;
    border: 1px solid transparent;
}

.apps .open {
    border-color: #164a75;
    border-radius: 3px;
    background: linear-gradient(135deg, #b4dbee, #6cb0d6 50%, #539fcc);
    box-shadow: inset 0 0 0 1px #a5d0e8;
}

.apps .current {
    background: linear-gradient(135deg, #f2f9fd, #b0d9ec 60%, #8bc6e1);
}

.tray {
    display: flex;
    align-items: center;
    gap: 10px;
    height: 100%;
    margin-left: auto;
    margin-right: 1px;
    color: #fff;
}

.lang {
    margin-right: 6px;
    padding-bottom: 6px;
}

.clock {
    width: 62px;
    margin-left: 6px;
    line-height: 17px;
    text-align: center;
}

.peek {
    width: 13px;
    height: 100%;
    border: 1px solid #6a8aae;
    background: linear-gradient(135deg, #5d7fa6, #1d416d 50%);
}

/* Popups lie over the window */
.tip {
    position: absolute;
    top: 165px;
    left: 198px;
    width: 210px;
    height: 80px;
    padding: 6px 4px;
    border: 1px solid #767676;
    border-radius: 3px;
    background: linear-gradient(#fff, #c9d9ef);
    box-shadow: 3px 3px 3px rgba(0, 0, 0, 0.4);
    color: #4c4c4c;
}

.tip strong {
    font-weight: 600;
}

.tip p {
    margin: 10px 8px 6px;
}

.tip-help {
    display: flex;
    align-items: center;
    gap: 8px;
    padding: 8px 1px;
    border-top: 1px solid #9db4d6;
}

.network-tip {
    position: absolute;
    right: 18px;
    bottom: 40px;
    width: 104px;
    height: 34px;
    padding: 1px 4px;
    border: 1px solid #767676;
    border-radius: 3px;
    background: linear-gradient(#fff, #e4e5f0);
    color: #575757;
    font-size: 12px;
    line-height: 15px;
    white-space: nowrap;
}

.marks {
    position: absolute;
    top: 0;
    left: 149px;
    z-index: 3;
    pointer-events: none;
}
```
